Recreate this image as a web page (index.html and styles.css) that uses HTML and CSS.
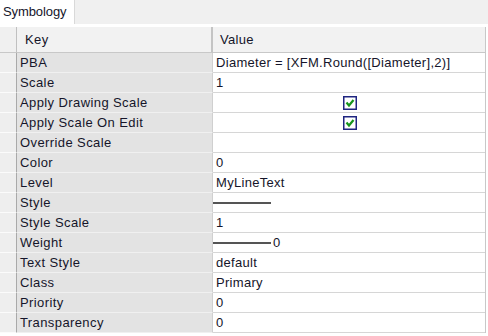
FILE: index.html
```html
<!DOCTYPE html>
<html>
<head>
<meta charset="utf-8">
<link rel="stylesheet" href="styles.css">
</head>
<body>
<div class="tabbar">
  <div class="tab">Symbology</div>
  <div class="tabrest"></div>
</div>
<div class="gap"></div>
<div class="grid">
  <div class="row head">
    <div class="rh"></div>
    <div class="key">Key</div>
    <div class="val">Value</div>
  </div>
  <div class="row"><div class="rh"></div><div class="key">PBA</div><div class="val">Diameter = [XFM.Round([Diameter],2)]</div></div>
  <div class="row"><div class="rh"></div><div class="key">Scale</div><div class="val">1</div></div>
  <div class="row"><div class="rh"></div><div class="key">Apply Drawing Scale</div><div class="val center"><svg class="chk" width="14" height="14" viewBox="0 0 14 14"><rect x="0.75" y="0.75" width="12.5" height="12.5" fill="#fff" stroke="#1f2580" stroke-width="1.5"/><polyline points="3.5,6.5 6,9.5 10.5,4" fill="none" stroke="#17951c" stroke-width="2.2"/></svg></div></div>
  <div class="row"><div class="rh"></div><div class="key">Apply Scale On Edit</div><div class="val center"><svg class="chk" width="14" height="14" viewBox="0 0 14 14"><rect x="0.75" y="0.75" width="12.5" height="12.5" fill="#fff" stroke="#1f2580" stroke-width="1.5"/><polyline points="3.5,6.5 6,9.5 10.5,4" fill="none" stroke="#17951c" stroke-width="2.2"/></svg></div></div>
  <div class="row"><div class="rh"></div><div class="key">Override Scale</div><div class="val"></div></div>
  <div class="row"><div class="rh"></div><div class="key">Color</div><div class="val">0</div></div>
  <div class="row"><div class="rh"></div><div class="key">Level</div><div class="val">MyLineText</div></div>
  <div class="row"><div class="rh"></div><div class="key">Style</div><div class="val line"><span class="stroke"></span></div></div>
  <div class="row"><div class="rh"></div><div class="key">Style Scale</div><div class="val">1</div></div>
  <div class="row"><div class="rh"></div><div class="key">Weight</div><div class="val line"><span class="stroke"></span><span class="wnum">0</span></div></div>
  <div class="row"><div class="rh"></div><div class="key">Text Style</div><div class="val">default</div></div>
  <div class="row"><div class="rh"></div><div class="key">Class</div><div class="val">Primary</div></div>
  <div class="row"><div class="rh"></div><div class="key">Priority</div><div class="val">0</div></div>
  <div class="row"><div class="rh"></div><div class="key">Transparency</div><div class="val">0</div></div>
</div>
</body>
</html>
```

FILE: styles.css
```css
html, body {
  margin: 0;
  padding: 0;
  background: #ffffff;
  width: 488px;
  height: 336px;
  overflow: hidden;
  font-family: "Liberation Sans", Arial, sans-serif;
  font-size: 13px;
  color: #15152a;
}
.tabbar {
  display: flex;
  height: 24px;
}
.tab {
  width: 74px;
  background: #ffffff;
  padding: 3px 0 0 3px;
  box-sizing: border-box;
  line-height: 17px;
  letter-spacing: -0.1px;
}
.tabrest {
  flex: 1;
  background: #f0f0f0;
  border-left: 1px solid #d9d9d9;
}
.gap {
  height: 3px;
}
.grid {
  width: 485px;
  border-right: 1px solid #c8c8c8;
}
.row {
  display: flex;
  height: 20px;
}
.rh {
  width: 17px;
  flex: none;
  background: #eeeeee;
  border-right: 1px solid #a9a9a9;
  border-bottom: 1px solid #fbfbfb;
  box-sizing: border-box;
}
.key {
  width: 196px;
  flex: none;
  box-sizing: border-box;
  background: #e3e3e3;
  border-right: 1px solid #d0d0d0;
  border-bottom: 1px solid #f0f0f0;
  padding-left: 3px;
  line-height: 19px;
  letter-spacing: 0.4px;
  white-space: nowrap;
}
.val {
  flex: 1;
  box-sizing: border-box;
  background: #ffffff;
  border-bottom: 1px solid #d6d6d6;
  padding-left: 3px;
  line-height: 19px;
  letter-spacing: 0.3px;
  white-space: nowrap;
  display: flex;
  align-items: center;
}
.val.center {
  justify-content: center;
  padding-left: 0;
}
.val.line {
  padding-left: 0;
}
.stroke {
  display: block;
  width: 58px;
  height: 2px;
  background: #555555;
  margin-top: 1px;
}
.wnum {
  margin-left: 2px;
}
.chk {
  display: block;
  margin-left: 1px;
}
.row.head {
  height: 26px;
}
.head .rh {
  background: #f0f0f0;
  border-bottom: 1px solid #c8c8c8;
  border-right: 1px solid #c0c0c0;
}
.head .key {
  background: #f2f2f2;
  border-bottom: 1px solid #c8c8c8;
  border-right: 2px solid #c4c4c4;
  padding-left: 8px;
  line-height: 26px;
}
.head .val {
  background: #f2f2f2;
  border-bottom: 1px solid #c8c8c8;
  padding-left: 7px;
}
```
